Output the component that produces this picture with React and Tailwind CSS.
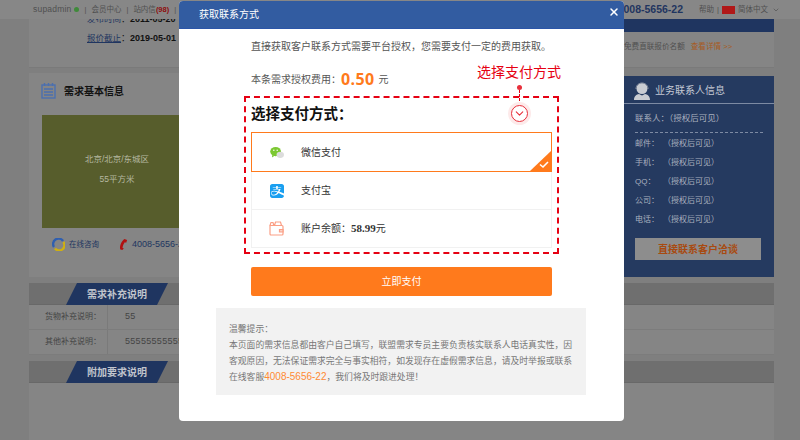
import { FaAlipay } from "react-icons/fa";
import { ChevronDown, X } from "lucide-react";

const contactRows = ["邮件", "手机", "QQ", "公司", "电话"];

const NotesIcon = () => (
  <svg width="15" height="16" viewBox="0 0 15 16" fill="none" stroke="#4a6fb0" strokeWidth="1.4">
    <rect x="1" y="2" width="13" height="13" />
    <path d="M3.5 0v3M7.5 0v3M11.5 0v3M3 6h9M3 9h9M3 12h9" />
  </svg>
);

const QqRing = () => (
  <svg width="13" height="13" viewBox="0 0 13 13" fill="none" strokeWidth="2.4">
    <path d="M2 9A5 5 0 0 1 11 3" stroke="#2f5fb0" />
    <path d="M11.4 4A5 5 0 0 1 3 10.4" stroke="#d0b010" />
  </svg>
);

const PhoneIcon = () => (
  <svg width="9" height="13" viewBox="0 0 10 13" fill="#b01010">
    <path d="M6 0.5l3 1-1 3-1.6-.4C5.2 6 4.2 8 3.8 10l1.5.6-1.5 2L1.5 12C0.2 9 2.5 3 6 0.5z" />
  </svg>
);

const AvatarIcon = () => (
  <svg width="18" height="18" viewBox="0 0 18 18" fill="#c9ccd2">
    <circle cx="9" cy="6.5" r="5.5" />
    <path d="M1 18c0-4 2.5-5.5 5-6l3 1.5 3-1.5c2.5.5 5 2 5 6z" />
    <path d="M3 7c0-8 12-8 12 0" fill="none" stroke="#8b93a3" strokeWidth="1" />
  </svg>
);

const WechatIcon = () => (
  <svg width="16" height="13" viewBox="0 0 16 14">
    <ellipse cx="6.5" cy="6" rx="5.8" ry="5" fill="#7cc832" />
    <path d="M3 9.5l-.5 3 3-2z" fill="#7cc832" />
    <circle cx="4.6" cy="4.6" r=".8" fill="#fff" />
    <circle cx="8.2" cy="4.6" r=".8" fill="#fff" />
    <ellipse cx="11.5" cy="9.5" rx="4" ry="3.4" fill="#dcdcdc" />
  </svg>
);

const WalletIcon = () => (
  <svg width="15" height="15" viewBox="0 0 15 15" fill="none" stroke="#fb9f85" strokeWidth="1.2">
    <path d="M1 4.5h12a1 1 0 0 1 1 1V13a1 1 0 0 1-1 1H2a1 1 0 0 1-1-1z" />
    <path d="M1 4.5L2 1.5h2l.8 3M5.5 4.5L6.5 1h5l1 3.5" />
    <path d="M10.5 8.5H14v2.5h-3.5z" fill="#fbd3c7" />
  </svg>
);

const Section = ({ title, children }) => (
  <section className="w-[745px] ml-[29px] mt-[6px] bg-[#858585]">
    <div className="relative h-[22px] bg-[#6f6f6f] border-b border-[#686868]">
      <div className="absolute left-[37px] top-0 w-[102px] h-[22px] bg-[#1f3560] [clip-path:polygon(11px_0,100%_0,91px_100%,0_100%)] flex items-center justify-center text-[10px] font-bold text-[#c0c4cc] font-['Liberation_Serif','Noto_Sans_CJK_SC',serif]">
        {title}
      </div>
    </div>
    {children}
  </section>
);

const SpecRow = ({ label, value }) => (
  <div className="flex h-[25px] border-b border-[#7c7c7c] text-[8px] text-[#444]">
    <div className="w-[79px] border-r border-[#7a7a7a] pr-[6px] flex items-center justify-end whitespace-nowrap">{label}</div>
    <div className="flex-1 pl-[17px] flex items-center text-[9px] tracking-[0.3px]">{value}</div>
  </div>
);

const PayOption = ({ icon, selected, children }) => (
  <div className={`relative flex items-center ${selected ? "h-[40px] border border-[#ff7a1c]" : "h-[38px] border-x border-b border-[#f1f1f1]"}`}>
    <div className="w-[49px] flex justify-center shrink-0">{icon}</div>
    <span className="text-[10px] text-[#333]">{children}</span>
    {selected && (
      <svg className="absolute right-0 bottom-0" width="21" height="20" viewBox="0 0 21 20">
        <path d="M21 0v20H0z" fill="#ff7a1c" />
        <path d="M10 13.5l3 2.5 5-5" fill="none" stroke="#fff" strokeWidth="1.6" />
      </svg>
    )}
  </div>
);

export default function App() {
  return (
    <div className="relative w-[800px] h-[440px] overflow-hidden bg-[#7f7f7f] font-['Liberation_Sans','Noto_Sans_CJK_SC',sans-serif]">
      {/* --- top nav --- */}
      <div className="h-[19px] bg-[#878787] flex items-center justify-between pl-[33px] pr-[20px] text-[7.5px] text-[#505050] whitespace-nowrap">
        <div className="flex items-center">
          <span className="text-[8.5px] tracking-[0.2px]">supadmin</span>
          <span className="ml-[3px] w-[5px] h-[5px] rounded-full bg-[#3f8a3a]" />
          <span className="mx-[5px]">|</span>
          <span>会员中心</span>
          <span className="mx-[5px]">|</span>
          <span>站内信<b className="text-[#8e0e0e]">(98)</b></span>
          <span className="mx-[5px]">|</span>
          <span>新</span>
        </div>
        <div className="flex items-center">
          <span className="text-[10.5px] font-bold text-[#1f3560]">4008-5656-22</span>
          <span className="ml-[16px]">帮助</span>
          <span className="mx-[3px]">|</span>
          <span className="w-[13px] h-[8px] bg-[#b01818]" />
          <span className="ml-[3px]">简体中文</span>
          <ChevronDown className="ml-[4px]" size={8} />
        </div>
      </div>

      {/* --- quote panel --- */}
      <div className="w-[745px] ml-[29px] h-[49px] bg-[#858585] flex border-b border-[#7a7a7a]">
        <div className="flex-1 overflow-hidden pl-[58px] text-[9px] text-[#111]">
          <div className="-mt-[6px] h-[13px] leading-[13px]">
            <span className="text-[8.5px] text-[#1f3560]">发布时间</span>：<b>2011-05-20</b>
          </div>
          <div className="mt-[6px] h-[13px] leading-[13px]">
            <span className="text-[8.5px] text-[#1f3560] underline">报价截止</span>：<b>2019-05-01</b>
          </div>
        </div>
        <div className="w-[150px]">
          <div className="h-[13px] bg-[#1f3560]" />
          <div className="mt-[9px] flex items-center whitespace-nowrap text-[7.6px] text-[#505050]">
            免费直联报价名额
            <span className="ml-[6px] text-[#a85a20]">查看详情 &gt;&gt;</span>
          </div>
        </div>
      </div>

      {/* --- basic info + contact card --- */}
      <div className="w-[745px] ml-[29px] mt-[5px] flex h-[204px]">
        <div className="w-[595px] bg-[#858585]">
          <div className="h-[42px] pl-[12px] pt-[10px] flex items-start gap-[8px]">
            <NotesIcon />
            <h3 className="text-[10px] font-bold text-[#111] mt-[1px]">需求基本信息</h3>
          </div>
          <div className="ml-[13px] w-[150px] h-[113px] bg-[#575d2c] flex flex-col items-center pt-[38px] gap-[7px] text-[8.5px] text-[#b5b8a0]">
            <span>北京/北京/东城区</span>
            <span>55平方米</span>
          </div>
          <div className="mt-[10px] pl-[23px] flex items-center text-[7.5px] text-[#1f3560] whitespace-nowrap">
            <QqRing />
            <span className="ml-[4px]">在线咨询</span>
            <span className="ml-[20px]"><PhoneIcon /></span>
            <span className="ml-[4px] text-[9px]">4008-5656-22</span>
          </div>
        </div>
        <aside className="w-[150px] mt-[3px] bg-[#253a60] text-[#a9b0bf] text-[8px]">
          <div className="h-[28px] flex items-center pl-[9px] pt-[2px] gap-[4px] border-b border-[#7d8aa3]">
            <AvatarIcon />
            <h3 className="text-[10px] text-[#c4c9d4]">业务联系人信息</h3>
          </div>
          <div className="mx-[11px] h-[29px] pt-[1px] flex items-center border-b border-dashed border-[#7d8aa3] text-[8.5px] whitespace-nowrap">
            联系人：（授权后可见）
          </div>
          <div className="ml-[11px] mt-[1px]">
            {contactRows.map((row) => (
              <div key={row} className="h-[19px] flex items-center whitespace-nowrap">
                <span className="w-[28px]">{row}：</span>（授权后可见）
              </div>
            ))}
          </div>
          <button className="ml-[11px] mt-[9px] w-[126px] h-[22px] bg-[#8d8d8d] text-[10px] font-bold text-[#a84a10] font-['Liberation_Serif','Noto_Sans_CJK_SC',serif]">
            直接联系客户洽谈
          </button>
        </aside>
      </div>

      <Section title="需求补充说明">
        <SpecRow label="货物补充说明：" value="55" />
        <SpecRow label="其他补充说明：" value="555555555555555555" />
      </Section>
      <Section title="附加要求说明">
        <div className="h-[60px]" />
      </Section>

      {/* --- payment dialog --- */}
      <div className="absolute left-[179px] top-[1px] w-[445px] h-[420px] bg-white rounded-[4px] overflow-hidden">
        <div className="h-[28px] bg-[#325ca1] border-b border-[#2b55a8] flex items-center justify-between pl-[20px] pr-[4px] text-white">
          <h2 className="text-[10px]">获取联系方式</h2>
          <X size={12} strokeWidth={3} className="-mt-[5px]" />
        </div>

        <div className="relative pl-[65px] pt-[11px]">
          <p className="ml-[7px] text-[10px] leading-[13px] text-[#555] whitespace-nowrap">
            直接获取客户联系方式需要平台授权，您需要支付一定的费用获取。
          </p>
          <p className="ml-[7px] mt-[14px] h-[24px] flex items-center text-[10px] text-[#555] whitespace-nowrap">
            本条需求授权费用：
            <span className="text-[16px] font-bold text-[#ff7a1c] tracking-[0.4px] font-['Open_Sans',sans-serif]">0.50</span>
            <span className="ml-[4px]">元</span>
          </p>

          <div className="mt-[5px] w-[315px] h-[158px] border-2 border-dashed border-[#e60012] px-[5px]">
            <h3 className="h-[34px] flex items-center text-[14.5px] font-bold text-[#111]">选择支付方式：</h3>
            <PayOption selected icon={<WechatIcon />}>微信支付</PayOption>
            <PayOption icon={<FaAlipay size={16} color="#1a9ff0" />}>支付宝</PayOption>
            <PayOption icon={<WalletIcon />}>
              账户余额：<b className="font-['Liberation_Serif',serif] text-[11px]">58.99</b>元
            </PayOption>
          </div>

          <button className="ml-[7px] mt-[13px] block w-[301px] h-[29px] rounded-[2px] bg-[#ff7a1c] text-[10px] text-white">
            立即支付
          </button>

          {/* annotation over the dashed box */}
          <div className="absolute left-[298px] top-[34px] flex flex-col items-center w-[84px]">
            <span className="text-[14px] leading-[18px] text-[#e60012] whitespace-nowrap">选择支付方式</span>
            <span className="mt-[4px] w-[5px] h-[5px] rounded-full bg-[#e8303c]" />
            <span className="w-px h-[15px] border-l border-dashed border-[#e60012]" />
            <span className="w-[17px] h-[17px] rounded-full border border-[#e8303c] ring-[3px] ring-[#fdeaea] flex items-center justify-center bg-white">
              <ChevronDown size={13} className="text-[#e8303c]" />
            </span>
          </div>
        </div>

        <div className="mt-[12px] ml-[37px] w-[370px] h-[87px] bg-[#f2f2f2] pl-[13px] pt-[13px] text-[8.8px] leading-[16px] text-[#777] whitespace-nowrap">
          <p>温馨提示：</p>
          <p>本页面的需求信息都由客户自己填写，联盟需求专员主要负责核实联系人电话真实性，因</p>
          <p>客观原因，无法保证需求完全与事实相符，如发现存在虚假需求信息，请及时举报或联系</p>
          <p>
            在线客服<span className="text-[10px] text-[#ff8a33]">4008-5656-22</span>，我们将及时跟进处理！
          </p>
        </div>
      </div>
    </div>
  );
}
